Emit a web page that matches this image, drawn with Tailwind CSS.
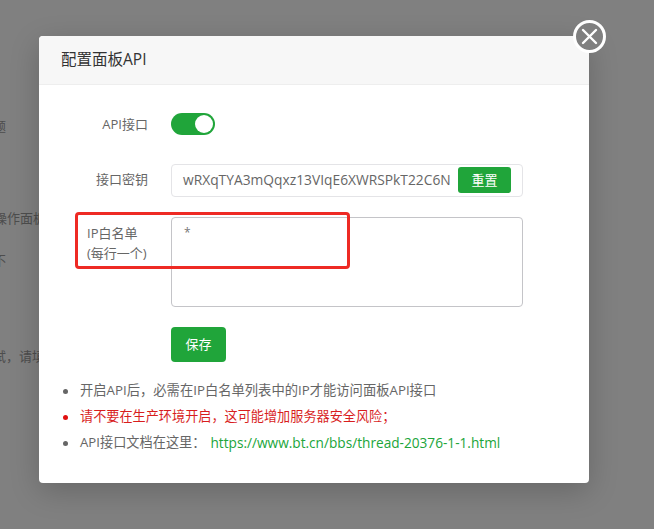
<!DOCTYPE html>
<html lang="zh">
<head>
<meta charset="utf-8">
<script src="https://cdn.jsdelivr.net/npm/@tailwindcss/browser@4"></script>
</head>
<body class="m-0 font-['Open_Sans','Noto_Sans_CJK_SC',sans-serif]">
<div class="relative w-[654px] h-[529px] overflow-hidden bg-[#808080]">
  <div class="flex flex-col items-start text-[13px] leading-5 text-[#4d4d4d]">
    <span class="mt-[116px] -ml-[7px]">题</span>
    <span class="mt-[72px] -ml-[6px] whitespace-nowrap">操作面板</span>
    <span class="mt-[22px] -ml-[7px]">不</span>
    <span class="mt-[76px] -ml-[7px] whitespace-nowrap">试，请填写</span>
  </div>

  <div class="absolute left-[39px] top-[36px] w-[550px] h-[447px] bg-white rounded-[4px] shadow-[0_8px_30px_rgba(0,0,0,0.2)]">
    <div class="h-[49px] flex items-center pl-[22px] pb-[1px] bg-[#f7f7f7] border-b border-[#eeeeee] rounded-t-[4px] text-[15.5px] text-[#333333]">配置面板API</div>

    <div class="pt-[28px] text-[13px] text-[#666666]">
      <div class="flex items-center h-[22px]">
        <span class="w-[109px] text-right pt-[2px]">API接口</span>
        <div class="ml-[23px] w-[44px] h-[22px] rounded-full bg-[#20a53a] flex items-center justify-end pr-[2px]">
          <span class="block w-[18px] h-[18px] rounded-full bg-white"></span>
        </div>
      </div>

      <div class="flex items-center mt-[29px] h-[33px]">
        <span class="w-[109px] text-right pb-[2px]">接口密钥</span>
        <div class="ml-[23px] w-[352px] h-[33px] border border-[#e4e4e7] rounded-[4px] flex items-center pl-[11px] pr-[11px] justify-between">
          <span class="whitespace-nowrap text-[13.8px]">wRXqTYA3mQqxz13VIqE6XWRSPkT22C6N</span>
          <button class="w-[53px] h-[26px] -mt-[1px] pt-[1px] bg-[#20a53a] text-white rounded-[3px] text-[13px]">重置</button>
        </div>
      </div>

      <div class="flex mt-[20px] h-[90px]">
        <div class="w-[109px] pl-[48px] pt-[6px] leading-[20px] whitespace-nowrap">IP白名单<br>(每行一个)</div>
        <div class="ml-[23px] w-[352px] h-[90px] border border-[#c4c4c8] rounded-[4px] px-[12px] py-[5px] leading-5 text-[12px] text-[#777777]">*</div>
      </div>

      <button class="block mt-[20px] ml-[132px] w-[55px] h-[35px] bg-[#20a53a] text-white rounded-[4px] text-[13px]">保存</button>

      <ul class="mt-[16px] ml-[24px]">
        <li class="flex items-center h-[26px] text-[13.3px]"><span class="w-[5px] h-[5px] rounded-full bg-[#666666] mr-[12px]"></span>开启API后，必需在IP白名单列表中的IP才能访问面板API接口</li>
        <li class="flex items-center h-[26px] text-[13.15px] text-[#d81e1e]"><span class="w-[5px] h-[5px] rounded-full bg-[#e01010] mr-[12px]"></span>请不要在生产环境开启，这可能增加服务器安全风险；</li>
        <li class="flex items-center h-[26px] text-[13.2px]"><span class="w-[5px] h-[5px] rounded-full bg-[#666666] mr-[12px]"></span>API接口文档在这里：<a class="ml-[5px] text-[13.65px] text-[#20a53a]">https://www.bt.cn/bbs/thread-20376-1-1.html</a></li>
      </ul>
    </div>
  </div>

  <div class="absolute left-[75px] top-[212px] w-[275px] h-[57px] border-[3px] border-[#ee2a24] rounded-[4px]"></div>

  <div class="absolute left-[573px] top-[20px] w-[33px] h-[33px] rounded-full bg-[#808080] border-[3px] border-white flex items-center justify-center">
    <svg width="17" height="17" viewBox="0 0 17 17" class="block"><path d="M2 2 L15 15 M15 2 L2 15" stroke="#fff" stroke-width="2.4" stroke-linecap="round"/></svg>
  </div>
</div>
</body>
</html>
